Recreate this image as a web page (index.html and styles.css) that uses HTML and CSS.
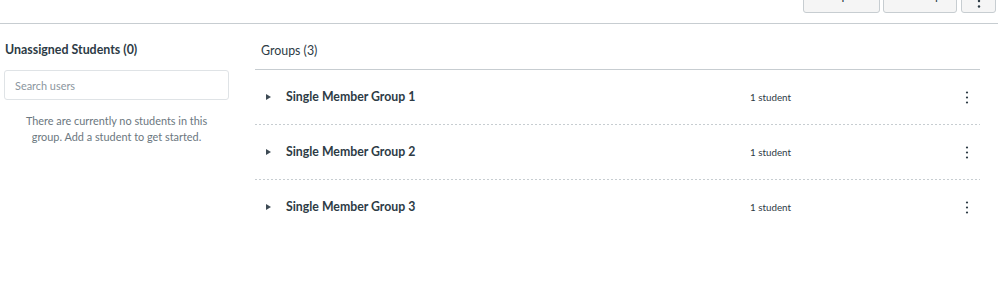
FILE: index.html
```html
<!DOCTYPE html>
<html lang="en">
<head>
<meta charset="utf-8">
<title>Groups</title>
<link rel="stylesheet" href="styles.css">
</head>
<body>
<header class="toolbar">
  <button class="btn" type="button">+ Import</button>
  <button class="btn" type="button">+ Group</button>
  <button class="btn btn-icon" type="button" aria-label="More">
    <svg width="4" height="14" viewBox="0 0 4 14"><circle cx="2" cy="1.5" r="1.2"/><circle cx="2" cy="7" r="1.2"/><circle cx="2" cy="12.5" r="1.2"/></svg>
  </button>
</header>
<main class="content">
  <section class="unassigned">
    <h2 class="col-title">Unassigned Students (0)</h2>
    <input class="search" type="text" placeholder="Search users">
    <p class="empty">There are currently no students in this group. Add a student to get started.</p>
  </section>
  <section class="groups">
    <h2 class="groups-title">Groups (3)</h2>
    <ul class="group-list">
      <li class="group-row">
        <span class="toggle"><svg width="5" height="6" viewBox="0 0 5 6"><path d="M0 0 L5 3 L0 6 Z"/></svg></span>
        <span class="group-name">Single Member Group 1</span>
        <span class="count">1 student</span>
        <span class="kebab"><svg width="4" height="13" viewBox="0 0 4 13"><circle cx="2" cy="1.5" r="1.1"/><circle cx="2" cy="6.5" r="1.1"/><circle cx="2" cy="11.5" r="1.1"/></svg></span>
      </li>
      <li class="group-row">
        <span class="toggle"><svg width="5" height="6" viewBox="0 0 5 6"><path d="M0 0 L5 3 L0 6 Z"/></svg></span>
        <span class="group-name">Single Member Group 2</span>
        <span class="count">1 student</span>
        <span class="kebab"><svg width="4" height="13" viewBox="0 0 4 13"><circle cx="2" cy="1.5" r="1.1"/><circle cx="2" cy="6.5" r="1.1"/><circle cx="2" cy="11.5" r="1.1"/></svg></span>
      </li>
      <li class="group-row">
        <span class="toggle"><svg width="5" height="6" viewBox="0 0 5 6"><path d="M0 0 L5 3 L0 6 Z"/></svg></span>
        <span class="group-name">Single Member Group 3</span>
        <span class="count">1 student</span>
        <span class="kebab"><svg width="4" height="13" viewBox="0 0 4 13"><circle cx="2" cy="1.5" r="1.1"/><circle cx="2" cy="6.5" r="1.1"/><circle cx="2" cy="11.5" r="1.1"/></svg></span>
      </li>
    </ul>
  </section>
</main>
</body>
</html>
```

FILE: styles.css
```css
* { box-sizing: border-box; }

html, body {
  margin: 0;
  padding: 0;
  background: #ffffff;
  color: #2d3b45;
  font-family: Lato, "Liberation Sans", sans-serif;
}

.toolbar {
  display: flex;
  justify-content: flex-end;
  align-items: flex-end;
  gap: 3px;
  margin-top: -21px;
  padding: 0 2px 10px 0;
  border-bottom: 1px solid #c7cdd1;
}

.btn {
  height: 34px;
  padding: 0 14px;
  font-family: inherit;
  font-size: 12.4px;
  line-height: 18px;
  color: #2d3b45;
  background: #f5f5f5;
  border: 1px solid #c7cdd1;
  border-radius: 3px;
}

.btn-icon {
  width: 35px;
  margin-left: 1px;
  padding: 0;
  display: flex;
  align-items: center;
  justify-content: center;
}

.btn-icon svg { fill: #2d3b45; margin-top: 10px; }

.content {
  display: flex;
  align-items: flex-start;
  padding-top: 16px;
}

.unassigned {
  width: 225px;
  margin-left: 4px;
}

.col-title {
  margin: 0 0 10px 1px;
  font-size: 12.4px;
  line-height: 20px;
  font-weight: 700;
}

.search {
  display: block;
  width: 225px;
  height: 30px;
  padding: 0 10px;
  font-family: inherit;
  font-size: 10.9px;
  color: #2d3b45;
  border: 1px solid #dfe3e6;
  border-radius: 3px;
  outline: none;
}

.search::placeholder { color: #8b969e; }

.empty {
  margin: 13px 10px 0;
  font-size: 10.9px;
  line-height: 16px;
  color: #6b7780;
  text-align: center;
}

.groups {
  width: 725px;
  margin-left: 26px;
}

.groups-title {
  margin: 0;
  padding: 1px 0 8px 6px;
  font-size: 12.4px;
  line-height: 20px;
  font-weight: 400;
  border-bottom: 1px solid #c7cdd1;
}

.group-list {
  list-style: none;
  margin: 0;
  padding: 0;
}

.group-row {
  display: flex;
  align-items: center;
  height: 55px;
  padding: 0 11px 1px 11px;
  background-image: linear-gradient(to right, #c7cdd1 50%, transparent 50%);
  background-size: 4px 1px;
  background-repeat: repeat-x;
  background-position: left bottom;
}

.group-row:last-child { background-image: none; }

.toggle {
  display: flex;
  width: 20px;
  fill: #3d4a54;
}

.group-name {
  width: 464px;
  font-size: 12.3px;
  font-weight: 700;
  line-height: 20px;
}

.count {
  flex: 1;
  font-size: 9.8px;
  line-height: 16px;
}

.kebab {
  display: flex;
  width: 4px;
  fill: #2d3b45;
}
```
